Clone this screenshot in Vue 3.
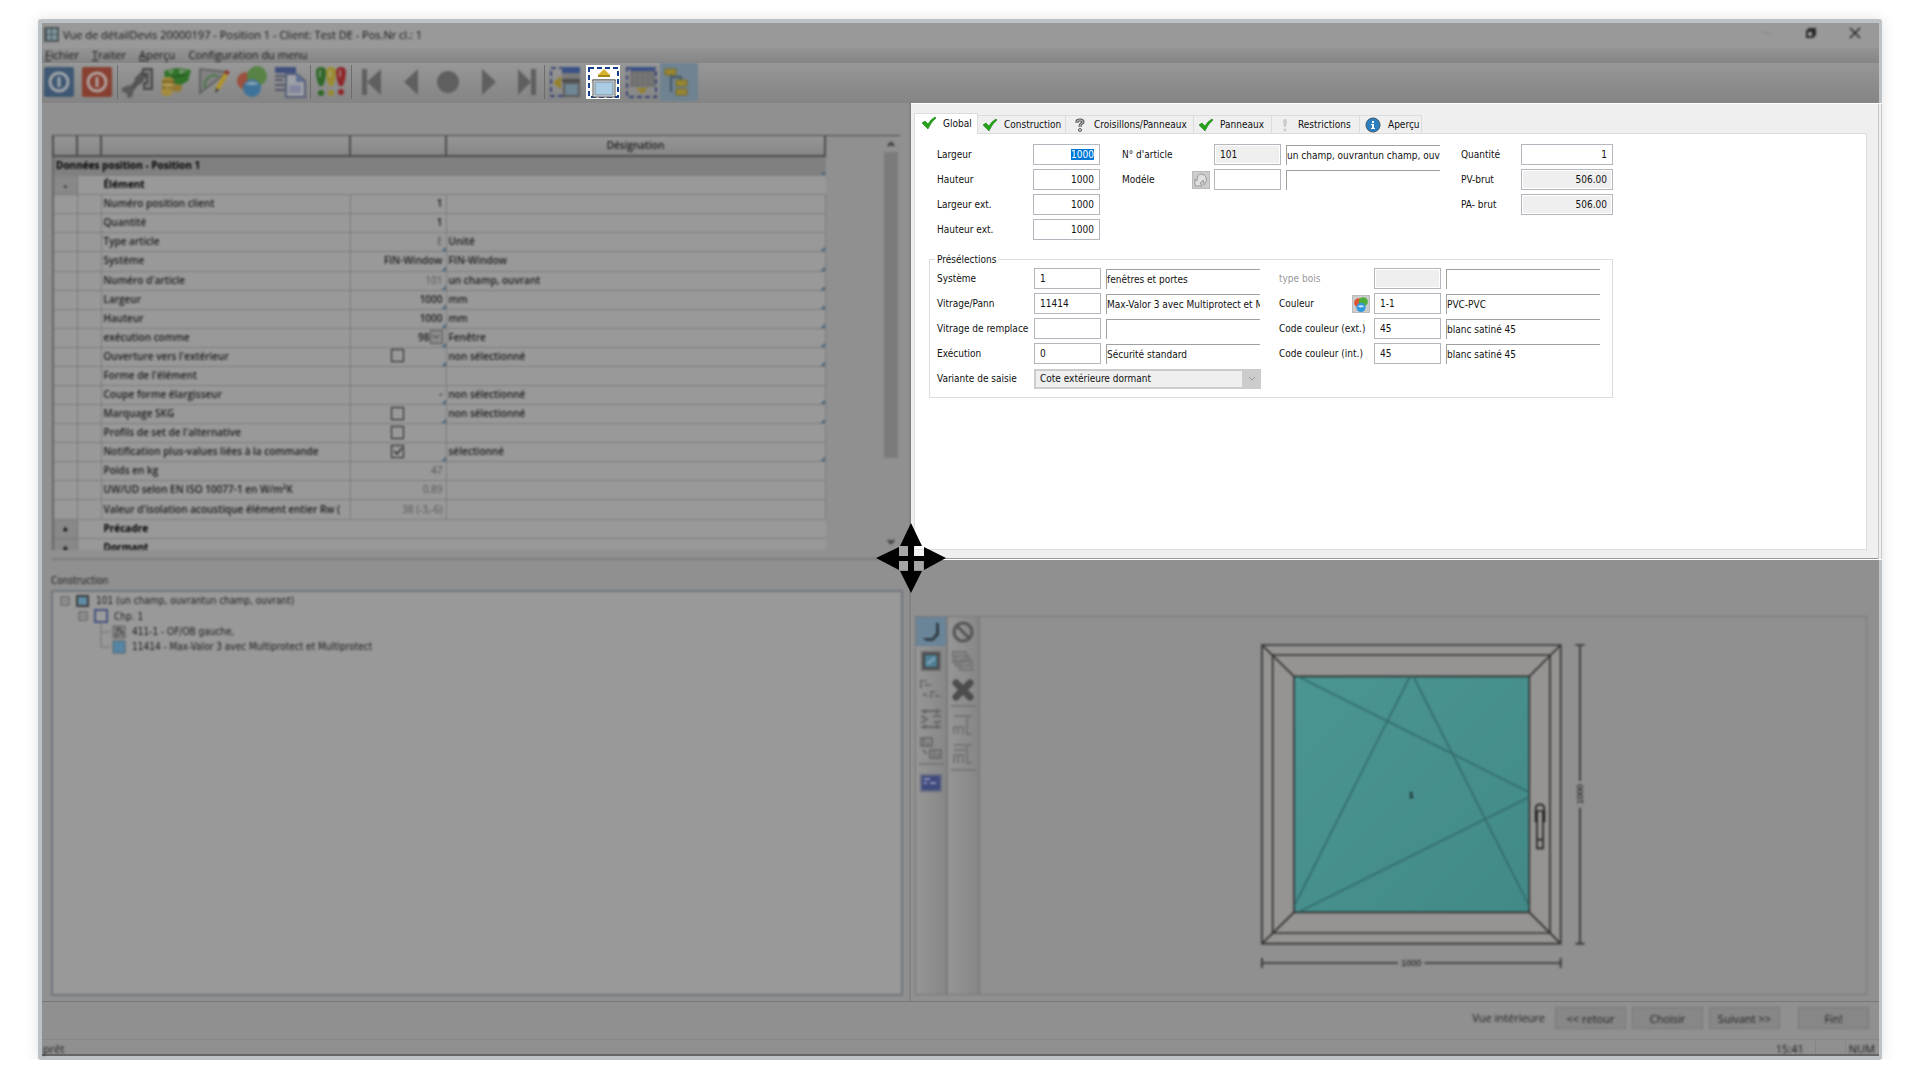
<script setup>
import { onMounted, ref } from 'vue'

const menus = ['Fichier', 'Traiter', 'Aperçu']

const rows = [
  { label: 'Numéro position client', value: '1' },
  { label: 'Quantité', value: '1' },
  { label: 'Type article', value: 'E', grey: true, name: 'Unité', mark: true },
  { label: 'Système', value: 'FIN-Window', name: 'FIN-Window', mark: true },
  { label: "Numéro d'article", value: '101', grey: true, name: 'un champ, ouvrant', mark: true },
  { label: 'Largeur', value: '1000', name: 'mm', mark: true },
  { label: 'Hauteur', value: '1000', name: 'mm', mark: true },
  { label: 'exécution comme', value: '98', drop: true, name: 'Fenêtre', mark: true },
  { label: "Ouverture vers l'extérieur", check: true, name: 'non sélectionné', mark: true },
  { label: "Forme de l'élément" },
  { label: 'Coupe forme élargisseur', value: '-', name: 'non sélectionné', mark: true },
  { label: 'Marquage SKG', check: true, name: 'non sélectionné', mark: true },
  { label: "Profils de set de l'alternative", check: true },
  { label: 'Notification plus-values liées à la commande', check: true, on: true, name: 'sélectionné', mark: true },
  { label: 'Poids en kg', value: '47', grey: true },
  { label: 'UW/UD selon EN ISO 10077-1 en W/m²K', value: '0.89', grey: true },
  { label: "Valeur d'isolation acoustique élément entier Rw (", value: '38 (-3,-6)', grey: true },
]

const tabs = [
  { name: 'Global', icon: 'check', width: 'w64' },
  { name: 'Construction', icon: 'check', width: 'w88' },
  { name: 'Croisillons/Panneaux', icon: 'question', width: 'w128' },
  { name: 'Panneaux', icon: 'check', width: 'w78' },
  { name: 'Restrictions', icon: 'exclaim', width: 'w88' },
  { name: 'Aperçu', icon: 'info', width: 'w62' },
]
const active = ref('Global')

const sizes = [
  { id: 'hauteur', label: 'Hauteur' },
  { id: 'largeur-ext', label: 'Largeur ext.' },
  { id: 'hauteur-ext', label: 'Hauteur ext.' },
]

const presetsLeft = [
  { id: 'systeme', label: 'Système', code: '1', text: 'fenêtres et portes' },
  { id: 'vitrage', label: 'Vitrage/Pann', code: '11414', text: 'Max-Valor 3 avec Multiprotect et M' },
  { id: 'remplace', label: 'Vitrage de remplace', code: '', text: '' },
  { id: 'execution', label: 'Exécution', code: '0', text: 'Sécurité standard' },
]
const presetsRight = [
  { id: 'bois', label: 'type bois', code: '', text: '', off: true },
  { id: 'couleur', label: 'Couleur', code: '1-1', text: 'PVC-PVC', picker: true },
  { id: 'code-ext', label: 'Code couleur (ext.)', code: '45', text: 'blanc satiné 45' },
  { id: 'code-int', label: 'Code couleur (int.)', code: '45', text: 'blanc satiné 45' },
]

const widthField = ref(null)
onMounted(() => {
  widthField.value.focus()
  widthField.value.select()
})
</script>

<template>
  <main class="window">
    <header class="titlebar">
      <svg class="soft" width="15" height="15" viewBox="0 0 15 15">
        <rect width="15" height="15" fill="#4d5558" />
        <path d="M3 2h4v5H3zM8 2h5v5H8zM3 8h4v5H3zM8 8h5v5H8z" fill="#7d949c" />
      </svg>
      <h1 class="soft">Vue de détailDevis 20000197 - Position 1 - Client: Test DE - Pos.Nr cl.: 1</h1>
      <div class="caption soft">
        <button type="button" aria-label="Réduire"><svg width="12" height="12" viewBox="0 0 12 12"><path d="M2 6h8" stroke="#808080" /></svg></button>
        <button type="button" aria-label="Restaurer"><svg width="12" height="12" viewBox="0 0 12 12" fill="none" stroke="#2a2a2a" stroke-width="2"><path d="M2 4h6v6H2zM4 3V2h6v6H9" /></svg></button>
        <button type="button" aria-label="Fermer"><svg width="12" height="12" viewBox="0 0 12 12" stroke="#2a2a2a" stroke-width="1.6"><path d="M1 1l10 10M11 1L1 11" /></svg></button>
      </div>
    </header>

    <nav class="menubar">
      <button v-for="m in menus" :key="m" type="button" class="soft"><u>{{ m[0] }}</u>{{ m.slice(1) }}</button>
      <button type="button" class="soft">Configuration du menu</button>
    </nav>

    <div class="toolbar">
      <div class="group">
        <button type="button" class="soft" aria-label="Enregistrer">
          <svg viewBox="0 0 32 32"><rect x="1" y="1" width="30" height="30" rx="2" fill="#365270" /><circle cx="16" cy="16" r="9" fill="none" stroke="#a3a8ac" stroke-width="3" /><path d="M16 11v10" stroke="#a3a8ac" stroke-width="3" /></svg>
        </button>
        <button type="button" class="soft" aria-label="Quitter">
          <svg viewBox="0 0 32 32"><rect x="1" y="1" width="30" height="30" rx="2" fill="#873726" /><circle cx="16" cy="16" r="9" fill="none" stroke="#b3a39f" stroke-width="3" /><path d="M16 11v10" stroke="#b3a39f" stroke-width="3" /></svg>
        </button>
      </div>
      <div class="group">
        <button type="button" class="soft" aria-label="Outils">
          <svg viewBox="0 0 32 32"><path d="M5 28L18 13" stroke="#4c4c4c" stroke-width="5" /><path d="M0 22l7-3 5 5-2 7-5 1 1-5-6-1z" fill="#555" /><path d="M12 13l8-8 5 5-7 9z" fill="#4f4f4f" /><path d="M21 3h9v20h-8v-6h3V8h-4z" fill="#777" stroke="#3f3f3f" stroke-width="2" /></svg>
        </button>
        <button type="button" class="soft" aria-label="Prix">
          <svg viewBox="0 0 32 32"><path d="M4 5l12-3 15 2-3 11-9 5L5 12z" fill="#27701f" /><path d="M8 5l6-1-3 4zM19 4l8 1-7 3z" fill="#7ba072" /><path d="M12 11l14-2" stroke="#1b5415" stroke-width="2" /><ellipse cx="8" cy="14" rx="6" ry="3" fill="#a68b36" /><path d="M2 14h12v9H2z" fill="#84691f" /><ellipse cx="7" cy="26" rx="6" ry="4" fill="#a68b36" /><ellipse cx="17" cy="22" rx="5" ry="4" fill="#947726" /><ellipse cx="8" cy="19" rx="6" ry="2" fill="#b19a4d" /></svg>
        </button>
        <button type="button" class="soft" aria-label="Dessin">
          <svg viewBox="0 0 32 32"><path d="M2 27V3l27 3z" fill="#808080" stroke="#5a5f5a" stroke-width="2" /><path d="M7 22a10 10 0 0 1 13-12" stroke="#42743d" stroke-width="2" fill="none" /><path d="M17 26l1-5 8-14 4 2-8 14z" fill="#b69422" /><path d="M26 7l2-3 4 2-2 3z" fill="#8c2d22" /><path d="M17 27l1-5 3 2z" fill="#333" /></svg>
        </button>
        <button type="button" class="soft" aria-label="Couleurs">
          <svg viewBox="0 0 32 32"><circle cx="10" cy="15" r="9" fill="#9c4a35" /><circle cx="21" cy="10" r="10" fill="#50823d" /><circle cx="16" cy="22" r="9" fill="#36709b" /><path d="M9 18q7-5 14 0-7 2-14 0z" fill="#88a5b8" /></svg>
        </button>
        <button type="button" class="soft" aria-label="Listes">
          <svg viewBox="0 0 32 32"><path d="M1 1h21v6H1z" fill="#37497b" /><path d="M1 10h10M1 14h8M1 19h10M1 24h10" stroke="#4a4f66" stroke-width="2" /><path d="M12 8h11l8 7v16H12z" fill="#a0a3a8" stroke="#4e5a75" stroke-width="2" /><path d="M22 7v9h9z" fill="#5b6c92" /><path d="M15 19h12v8H15z" fill="#8287a0" /></svg>
        </button>
      </div>
      <div class="group">
        <button type="button" class="soft" aria-label="Messages">
          <svg viewBox="0 0 32 32"><path d="M1 6q0-5 5-5t5 5q0 7-3 14H4Q1 13 1 6z" fill="#25621d" /><circle cx="6" cy="27" r="3" fill="#25621d" /><path d="M11 6q0-5 5-5t5 5q0 7-3 14h-4q-3-7-3-14z" fill="#9b8b25" /><circle cx="16" cy="27" r="3" fill="#9b8b25" /><path d="M21 6q0-5 5-5t5 5q0 7-3 14h-4q-3-7-3-14z" fill="#8e1c20" /><circle cx="26" cy="26" r="3" fill="#8e1c20" /><path d="M5 4v7M15 4v7M25 4v7" stroke="#bbb" stroke-width="2" opacity=".5" /></svg>
        </button>
      </div>
      <div class="group">
        <button type="button" class="soft" aria-label="Premier"><svg viewBox="0 0 32 32" fill="#5a5a5a"><path d="M6 3h5v26H6zM25 3v26L11 16z" /></svg></button>
        <button type="button" class="soft" aria-label="Précédent"><svg viewBox="0 0 32 32" fill="#5a5a5a"><path d="M24 3v26L10 16z" /></svg></button>
        <button type="button" class="soft" aria-label="Arrêt"><svg viewBox="0 0 32 32" fill="#5a5a5a"><circle cx="16" cy="16" r="11" /></svg></button>
        <button type="button" class="soft" aria-label="Suivant"><svg viewBox="0 0 32 32" fill="#5a5a5a"><path d="M12 3v26l14-13z" /></svg></button>
        <button type="button" class="soft" aria-label="Dernier"><svg viewBox="0 0 32 32" fill="#5a5a5a"><path d="M10 3v26l13-13zM23 3h5v26h-5z" /></svg></button>
      </div>
      <div class="group">
        <button type="button" class="soft" aria-label="Volet gauche">
          <svg viewBox="0 0 32 32"><rect x="2" y="2" width="28" height="28" fill="none" stroke="#2b3c72" stroke-width="2" stroke-dasharray="5 3" /><path d="M13 1h18v6H13z" fill="#2f4a84" /><path d="M13 7h18v6H13z" fill="#777" /><path d="M13 13h18v3H13z" fill="#444" /><path d="M15 17h15v13H15z" fill="#6c8596" stroke="#555" stroke-width="2" /><path d="M12 10v13l-8-6z" fill="#96801f" /></svg>
        </button>
        <button type="button" class="lit" aria-label="Volet haut">
          <svg viewBox="0 0 32 32"><rect x="1" y="1" width="30" height="30" fill="#fdfdfd" /><rect x="2" y="2" width="29" height="29" fill="none" stroke="#163a8c" stroke-width="2" stroke-dasharray="5 3" /><path d="M17 3l6 6v2H11V9z" fill="#d6b32a" /><path d="M11 9h12v2H11z" fill="#a8871a" /><path d="M5 13h24v3H5z" fill="#b9b9b9" /><path d="M6 14h22v17H6z" fill="#e8e8e8" stroke="#555" /><path d="M8 16h18v13H8z" fill="#a9cbe4" stroke="#7d8f9b" /></svg>
        </button>
        <button type="button" class="soft" aria-label="Volet bas">
          <svg viewBox="0 0 32 32"><rect x="2" y="2" width="29" height="29" fill="none" stroke="#2b3c72" stroke-width="2" stroke-dasharray="5 3" /><path d="M5 1h25v4H5z" fill="#2f4a84" /><path d="M5 5h25v16H5z" fill="#6b6b6b" /><path d="M5 9h25M5 13h25M5 17h25M10 5v16M15 5v16M20 5v16M25 5v16" stroke="#777" /><path d="M11 22h12l-6 6z" fill="#96801f" /></svg>
        </button>
        <button type="button" class="soft on" aria-label="Arborescence">
          <svg viewBox="0 0 32 32"><path d="M8 7v19M8 11h10v4" stroke="#3c5061" stroke-width="2" fill="none" /><path d="M2 3h11v6H2zM13 14h11v6H13zM13 23h11v6H13z" fill="#998628" stroke="#75651c" /></svg>
        </button>
      </div>
    </div>

    <div class="workspace">
      <section class="left">
        <div class="sheet soft">
          <div class="sheet-body">
            <table>
              <colgroup><col class="c1" /><col class="c2" /><col class="c3" /><col class="c4" /><col class="c5" /></colgroup>
              <thead><tr><th></th><th></th><th></th><th></th><th>Désignation</th></tr></thead>
              <tbody>
                <tr class="band"><td colspan="5" class="mark">Données position - Position 1</td></tr>
                <tr class="head"><td class="toggle"><button type="button">-</button></td><td></td><td colspan="3">Élément</td></tr>
                <tr v-for="r in rows" :key="r.label">
                  <td></td><td></td>
                  <td>{{ r.label }}</td>
                  <td class="value" :class="{ mark: r.mark, grey: r.grey, center: r.check }">
                    <input v-if="r.check" type="checkbox" :checked="r.on" :aria-label="r.label" />
                    <span v-else-if="r.drop" class="drop">{{ r.value }}<button type="button" aria-label="Ouvrir la liste"><svg width="8" height="6" viewBox="0 0 8 6"><path d="M1 1l3 3 3-3" fill="none" stroke="#333" /></svg></button></span>
                    <template v-else>{{ r.value }}</template>
                  </td>
                  <td :class="{ mark: r.mark }">{{ r.name }}</td>
                </tr>
                <tr class="head"><td class="toggle"><button type="button">+</button></td><td></td><td colspan="3">Précadre</td></tr>
                <tr class="head"><td class="toggle"><button type="button">+</button></td><td></td><td colspan="3">Dormant</td></tr>
              </tbody>
            </table>
          </div>
          <div class="scroll">
            <svg width="14" height="16" viewBox="0 0 14 16"><path d="M4 10l3-3 3 3" fill="none" stroke="#333" stroke-width="2" /></svg>
            <div class="thumb"></div>
            <svg width="14" height="16" viewBox="0 0 14 16"><path d="M4 6l3 3 3-3" fill="none" stroke="#333" stroke-width="2" /></svg>
          </div>
        </div>
        <div class="structure soft">
          <h2>Construction</h2>
          <div class="tree">
            <ul>
              <li class="l0">
                <svg width="10" height="10" viewBox="0 0 10 10"><path d="M1 1h8v8H1zM3 5h4" fill="none" stroke="#555" /></svg>
                <svg width="14" height="12" viewBox="0 0 14 12"><path d="M1 1h11v10H1z" fill="#5f8ba3" stroke="#3d3d3d" stroke-width="2" /></svg>
                <span>101 (un champ, ouvrantun champ, ouvrant)</span>
              </li>
              <li class="l1">
                <svg width="10" height="10" viewBox="0 0 10 10"><path d="M1 1h8v8H1zM3 5h4" fill="none" stroke="#555" /></svg>
                <svg width="14" height="14" viewBox="0 0 14 14"><path d="M1 1h12v12H1z" fill="#9c9c9c" stroke="#45527f" stroke-width="2" /></svg>
                <span>Chp. 1</span>
              </li>
              <li class="l2">
                <svg width="10" height="16" viewBox="0 0 10 16"><path d="M1 0v16M1 8h9" fill="none" stroke="#707070" /></svg>
                <svg width="14" height="14" viewBox="0 0 14 14"><path d="M1 1h12v12H1z" fill="#858585" stroke="#606060" /><path d="M3 11l4-9 5 9M3 3l8 4-8 5" fill="none" stroke="#444" /></svg>
                <span>411-1 - OF/OB gauche,</span>
              </li>
              <li class="l2">
                <svg width="10" height="16" viewBox="0 0 10 16"><path d="M1 0v8h9" fill="none" stroke="#707070" /></svg>
                <svg width="14" height="14" viewBox="0 0 14 14"><path d="M1 1h12v12H1z" fill="#5586a4" stroke="#52656f" /></svg>
                <span>11414 - Max-Valor 3 avec Multiprotect et Multiprotect</span>
              </li>
            </ul>
          </div>
        </div>
      </section>

      <section class="right">
        <form class="detail" @submit.prevent>
          <div class="tabs" role="tablist">
            <button v-for="t in tabs" :key="t.name" type="button" role="tab" :class="[t.width, { active: t.name === active }]" :aria-selected="t.name === active" @click="active = t.name">
              <svg v-if="t.icon === 'check'" width="14" height="14" viewBox="0 0 14 14"><path d="M0 7l3-2 3 3q3-5 7-7l1 1q-5 4-8 11z" fill="#23a315" stroke="#157c0d" stroke-width=".6" /></svg>
              <svg v-else-if="t.icon === 'question'" width="14" height="14" viewBox="0 0 14 14"><path d="M4 5V3q0-1 3-1t3 2q0 1-2 2-1 1-1 3" fill="none" stroke="#555" stroke-width="3" /><path d="M4 5V3q0-1 3-1t3 2q0 1-2 2-1 1-1 3" fill="none" stroke="#ccc" /><circle cx="7" cy="12" r="1.6" fill="#bbb" stroke="#555" stroke-width=".8" /></svg>
              <svg v-else-if="t.icon === 'exclaim'" width="14" height="14" viewBox="0 0 14 14"><path d="M6 3q0-2 2-2t2 2q0 3-1 6H7Q6 6 6 3z" fill="#ccc" /><circle cx="8" cy="12" r="1.4" fill="#ccc" /></svg>
              <svg v-else width="16" height="16" viewBox="0 0 16 16"><circle cx="8" cy="8" r="7" fill="#2d7fc0" stroke="#3a5468" /><path d="M6 7h3v4h1v1H6v-1h1V8H6zM7 4h2v2H7z" fill="#fff" /></svg>
              {{ t.name }}
            </button>
          </div>
          <div class="page">
            <div class="basics">
              <div class="grid sizes">
                <label for="largeur">Largeur</label>
                <input id="largeur" ref="widthField" class="num" type="text" value="1000" />
                <template v-for="s in sizes" :key="s.id">
                  <label :for="s.id">{{ s.label }}</label>
                  <input :id="s.id" class="num" type="text" value="1000" />
                </template>
              </div>
              <div class="grid article">
                <label for="article">N° d'article</label>
                <input id="article" class="ro" type="text" value="101" readonly />
                <output>un champ, ouvrantun champ, ouv</output>
                <div class="pair">
                  <label for="modele">Modéle</label>
                  <button type="button" class="mini" aria-label="Annuler le modèle"><svg width="16" height="16" viewBox="0 0 16 16"><path d="M2 7v7h7l-2-3q3-1 3-3 1 2 1 5 4-4 2-8-2-3-5-3-4 0-4 7z" fill="#e0e0e0" stroke="#999" /></svg></button>
                </div>
                <input id="modele" type="text" value="" />
                <output></output>
              </div>
              <div class="grid totals">
                <label for="quantite">Quantité</label>
                <input id="quantite" class="num" type="text" value="1" />
                <label for="pv">PV-brut</label>
                <input id="pv" class="num ro" type="text" value="506.00" readonly />
                <label for="pa">PA- brut</label>
                <input id="pa" class="num ro" type="text" value="506.00" readonly />
              </div>
            </div>
            <fieldset>
              <legend>Présélections</legend>
              <div class="presets">
                <div class="grid preset">
                  <template v-for="p in presetsLeft" :key="p.id">
                    <label :for="p.id">{{ p.label }}</label>
                    <input :id="p.id" type="text" :value="p.code" />
                    <output>{{ p.text }}</output>
                  </template>
                  <label for="variante">Variante de saisie</label>
                  <div class="select">
                    <select id="variante" disabled><option>Cote extérieure dormant</option></select>
                    <svg width="8" height="6" viewBox="0 0 8 6"><path d="M1 1l3 3 3-3" fill="none" stroke="#999" /></svg>
                  </div>
                </div>
                <div class="grid preset second">
                  <template v-for="p in presetsRight" :key="p.id">
                    <div class="pair">
                      <label :for="p.id" :class="{ off: p.off }">{{ p.label }}</label>
                      <button v-if="p.picker" type="button" class="mini" aria-label="Choisir la couleur"><svg width="16" height="16" viewBox="0 0 14 14"><circle cx="5" cy="6" r="4" fill="#dd5533" /><circle cx="9" cy="5" r="4" fill="#4fae3a" /><circle cx="7" cy="10" r="4" fill="#3398dd" /><path d="M4 9q3-2 6 0-3 2-6 0z" fill="#cfe6f7" /></svg></button>
                    </div>
                    <input :id="p.id" type="text" :value="p.code" :class="{ ro: p.off }" :disabled="p.off" />
                    <output>{{ p.text }}</output>
                  </template>
                </div>
              </div>
            </fieldset>
          </div>
          <svg class="move" width="70" height="70" viewBox="0 0 70 70">
            <path d="M23 23h24v24H23z" fill="#fff" opacity=".2" />
            <path d="M35 0l11 23H38v10h10V24l22 11-22 12V38H38v10h8L35 70 24 48h8V38H23v9L0 35l23-11v9h9V23h-8z" fill="#000" />
          </svg>
        </form>

        <div class="viewer soft">
          <div class="strip">
            <button type="button" class="on" aria-label="Vue"><svg viewBox="0 0 24 24"><path d="M17 2l3 2v11l-6 6H7l-3-3h9l4-5z" fill="#333f48" /><path d="M2 2h13v10l-5 5H2z" fill="#6a8498" /></svg></button>
            <button type="button" aria-label="Vitrage"><svg viewBox="0 0 24 24"><path d="M2 2h20v20H2z" fill="#6b6b6b" /><path d="M5 5h14v14H5z" fill="#4f7f95" stroke="#444" stroke-width="2" /><path d="M8 15l8-6" stroke="#7aa0b3" stroke-width="3" /></svg></button>
            <button type="button" aria-label="Déplacer"><svg viewBox="0 0 24 24" fill="none" stroke="#666" stroke-width="2"><path d="M2 10V3h5M6 7h6M4 16l5 2M12 20v-6h5M16 18h6" stroke-dasharray="4 1" /></svg></button>
            <button type="button" aria-label="Croisillons"><svg viewBox="0 0 24 24" fill="none" stroke="#666" stroke-width="2"><path d="M2 4h20M2 9l6 3-6 4M2 20h20M14 9h8M15 15h7M6 2v5M18 2v5M6 17v5M18 17v5" /></svg></button>
            <button type="button" aria-label="Copier la partie"><svg viewBox="0 0 24 24" fill="none" stroke="#6c6c6c" stroke-width="2"><path d="M2 2h11v8H2zM5 2v8M9 5v4M4 14l4 4M11 14h11v8H11zM15 14v8M19 17v4" /></svg></button>
            <hr />
            <button type="button" aria-label="Écran"><svg viewBox="0 0 24 24"><path d="M2 4h20v16H2z" fill="#3f4a7e" stroke="#686d80" stroke-width="2" /><path d="M5 8h6M5 12h3M11 12h6" stroke="#8f95b8" stroke-width="2" /></svg></button>
          </div>
          <div class="strip">
            <button type="button" aria-label="Interdire"><svg viewBox="0 0 24 24" fill="none" stroke="#555" stroke-width="3"><circle cx="12" cy="12" r="9" /><path d="M6 6l12 12" /></svg></button>
            <button type="button" aria-label="Dupliquer"><svg viewBox="0 0 24 24" fill="#8c8c8c" stroke="#757575" stroke-width="2"><path d="M2 3h13v10H2zM5 7h13v10H5zM9 11h12v10H9z" /></svg></button>
            <button type="button" aria-label="Supprimer"><svg viewBox="0 0 24 24" stroke="#4c4c4c" stroke-width="7" stroke-linecap="round"><path d="M5 5l14 14M19 5L5 19" /></svg></button>
            <hr />
            <button type="button" aria-label="Profil"><svg viewBox="0 0 24 24" fill="none" stroke="#757575" stroke-width="2"><path d="M3 3h18M16 3v18h5M3 21v-7h9v7M7 14v7" /></svg></button>
            <button type="button" aria-label="Profil double"><svg viewBox="0 0 24 24" fill="none" stroke="#757575" stroke-width="2"><path d="M3 3h18M3 8h12M16 3v18h5M3 21v-8h9v8M7 13v8" /></svg></button>
            <hr />
          </div>
          <div class="canvas">
            <svg width="326" height="326" viewBox="90 100 978 978">
              <defs><linearGradient id="glass" x1="0" y1="0" x2="1" y2="1"><stop offset="0" stop-color="#4b9592" /><stop offset="1" stop-color="#418a88" /></linearGradient></defs>
              <g stroke="#333" stroke-width="5" fill="none">
                <path d="M96 106h896v896H96z" fill="#969492" />
                <path d="M128 136h832v834H128z" />
                <path d="M96 106l96 94M992 106l-94 94M96 1002l96-94M992 1002l-94-94" />
                <path d="M192 200h706v708H192z" fill="url(#glass)" />
                <path d="M96 1060h408M584 1060h408M96 1045v30M992 1045v30M1050 106v408M1050 594v408M1036 106h28M1036 1002h28" />
              </g>
              <path d="M204 200L898 548M898 562L204 908M192 890L540 200M550 200L898 890" stroke="#2f6563" stroke-width="4" fill="none" />
              <path d="M917 638V598q0-14 13-14t13 14v40M921 604h18v112h-18zM921 690h18" stroke="#222" stroke-width="5" fill="none" />
              <g font-family="Liberation Sans, sans-serif" font-size="27" text-anchor="middle" fill="#111">
                <text x="544" y="564" font-weight="bold">1</text>
                <text x="544" y="1070">1000</text>
                <text x="1060" y="554" transform="rotate(-90 1060 554)">1000</text>
              </g>
            </svg>
          </div>
        </div>
      </section>
    </div>

    <footer class="actions">
      <span class="soft">Vue intérieure</span>
      <button type="button" class="soft">&lt;&lt; retour</button>
      <button type="button" class="soft">Choisir</button>
      <button type="button" class="soft">Suivant &gt;&gt;</button>
      <button type="button" class="soft last">Fin!</button>
    </footer>
    <div class="status">
      <span class="soft">prêt</span>
      <span class="soft clock">15:41</span>
      <span class="cell"></span>
      <span class="soft num-lock">NUM</span>
    </div>
  </main>
</template>

<style>
body {
  margin: 0;
  background: #fff;
}
</style>

<style scoped>
* {
  box-sizing: border-box;
}
.window {
  display: flex;
  flex-direction: column;
  height: calc(100vh - 39px);
  min-height: 900px;
  margin: 19px 38px 0;
  border: 4px solid #bcc2c6;
  border-right-width: 3px;
  border-radius: 3px;
  box-shadow: 0 0 14px #0000001f;
  background: #909090;
  color: #1c1c1c;
  font: 10px/15px 'DejaVu Sans Condensed', 'DejaVu Sans', sans-serif;
}
.soft {
  filter: blur(1px);
}
button {
  display: flex;
  align-items: center;
  justify-content: center;
  padding: 0;
  border: 0;
  background: none;
  color: inherit;
  font: inherit;
}
svg {
  flex: none;
  display: block;
}
h1,
h2 {
  margin: 0;
  font: inherit;
}

.titlebar {
  display: flex;
  flex: none;
  align-items: center;
  gap: 4px;
  height: 25px;
  padding: 0 2px 3px;
  background: #999;
}
.titlebar h1,
.menubar,
.sheet,
.actions,
.status {
  font-family: 'Open Sans', 'Noto Sans', sans-serif;
}
.titlebar h1 {
  color: #111;
  font-size: 11px;
}
.caption {
  display: flex;
  margin-left: auto;
  padding-bottom: 3px;
}
.caption button {
  width: 44px;
  height: 12px;
}
.menubar {
  display: flex;
  flex: none;
  align-items: flex-start;
  gap: 13px;
  height: 15px;
  padding-left: 3px;
  background: linear-gradient(#959595, #858585);
  color: #111;
  font-size: 11px;
  line-height: 13px;
}
.toolbar {
  display: flex;
  flex: none;
  height: 40px;
  padding-top: 2px;
  background: linear-gradient(#979797, #848484);
}
.group {
  display: flex;
  gap: 4px;
  height: 34px;
}
.group + .group {
  margin-left: 3px;
  padding-left: 3px;
  border-left: 1px solid #6d6d6d;
}
.group button {
  width: 34px;
  height: 34px;
}
.group .soft {
  filter: blur(1px) opacity(0.9);
}
.group svg {
  width: 32px;
  height: 32px;
}
.group .lit {
  background: #fff;
}
.group .on {
  background: #6b8192;
  box-shadow: 0 0 0 2px #6b8192;
}

.workspace {
  display: grid;
  flex: 1;
  grid-template-columns: minmax(0, 869fr) minmax(0, 968fr);
  grid-template-rows: minmax(0, 1fr);
  min-height: 0;
  border-bottom: 1px solid #777;
}
.left,
.right {
  display: grid;
  grid-template-rows: minmax(0, 458fr) minmax(0, 441fr);
  min-width: 0;
}
.left {
  border-right: 2px solid #838383;
}
.sheet {
  display: flex;
  justify-content: space-between;
  margin: 32px 9px 0 10px;
  padding-bottom: 8px;
  border-bottom: 2px solid #7b7b7b;
  font-size: 10px;
}
.sheet-body {
  flex: 1;
  overflow: hidden;
  border-top: 1px solid #4a4a4a;
}
table {
  width: 774px;
  height: 422px;
  border-collapse: collapse;
  table-layout: fixed;
  border-left: 2px solid #666;
}
.c1,
.c2 {
  width: 24px;
}
.c3 {
  width: 249px;
}
.c4 {
  width: 96px;
}
th {
  height: 20px;
  padding: 0;
  border: 2px solid #4d4d4d;
  border-top: 0;
  background: linear-gradient(#969696, #878787);
  font-weight: 600;
}
td {
  padding: 0 2px 2px;
  border: 1px solid #7c7c7c;
  background-color: #999;
  font-weight: 600;
  line-height: 14px;
  white-space: nowrap;
  overflow: hidden;
}
.band td {
  background-color: #808080;
  border-color: #808080;
  color: #000;
  font-weight: 700;
}
.head td {
  border-right-color: #999;
  color: #000;
  font-weight: 700;
}
.head .toggle {
  padding: 0;
  background: #888;
  border-color: #777;
}
.toggle button {
  width: 100%;
  height: 14px;
}
td.mark {
  background-image: linear-gradient(135deg, transparent 50%, #4d6a80 50%);
  background-position: right bottom;
  background-repeat: no-repeat;
  background-size: 4px 4px;
}
.value {
  padding-right: 3px;
  text-align: right;
}
.value.center {
  text-align: center;
}
.grey {
  color: #555;
  font-weight: 400;
}
.drop {
  display: flex;
  justify-content: flex-end;
}
.drop button {
  width: 13px;
  height: 14px;
  border: 1px solid #555;
  background: #8b8b8b;
}
input[type='checkbox'] {
  display: block;
  width: 13px;
  height: 13px;
  margin: 0 auto;
  padding: 0;
  appearance: none;
  border: 1px solid #222;
  background: none;
}
input[type='checkbox']:checked {
  background: url("data:image/svg+xml,%3Csvg xmlns='http://www.w3.org/2000/svg' viewBox='0 0 11 11'%3E%3Cpath d='M2 5l3 3 5-6' fill='none' stroke='%23222' stroke-width='1.4'/%3E%3C/svg%3E");
}
.scroll {
  display: flex;
  flex: none;
  flex-direction: column;
  width: 16px;
  padding-right: 2px;
  border-top: 1px solid #4a4a4a;
}
.thumb {
  flex: 0 1 306px;
  margin-bottom: auto;
  background: #7b7b7b;
}

.structure {
  display: flex;
  flex-direction: column;
  padding: 13px 6px 5px 9px;
}
.tree {
  flex: 1;
  margin-top: 2px;
  border: 2px solid #70757b;
  background: #999;
}
.tree ul {
  display: flex;
  flex-direction: column;
  justify-content: space-between;
  height: 62px;
  margin: 0;
  padding: 1px 0 0 7px;
  list-style: none;
}
.tree li {
  display: flex;
  align-items: center;
  gap: 6px;
  height: 15px;
}
.l1 {
  padding-left: 18px;
}
.l2 {
  padding-left: 40px;
}
.tree .l2 {
  gap: 2px;
}
.l2 span {
  padding-left: 4px;
}

.detail {
  position: relative;
  z-index: 1;
  display: flex;
  flex-direction: column;
  margin-right: -3px;
  padding: 9px 15px 9px 3px;
  border-top: 1px solid #fff;
  border-bottom: 1px solid #fff;
  background: #efefef;
  box-shadow: inset -1px 0 #c4c8cc, inset -3px 0 #efefef, inset -4px 0 #c4c8cc, inset 0 -1px #999;
  color: #111;
}
.tabs {
  display: flex;
  align-items: flex-end;
  height: 20px;
}
.tabs button {
  justify-content: flex-start;
  gap: 7px;
  height: 18px;
  padding-left: 5px;
  border: 1px solid #dcdcdc;
  border-left: 0;
  border-bottom: 0;
  white-space: nowrap;
}
.tabs .active {
  z-index: 1;
  height: 21px;
  margin-bottom: -1px;
  padding: 0 0 2px 7px;
  border-left: 1px solid #dcdcdc;
  background: #fff;
}
.w62 {
  width: 62px;
}
.w64 {
  width: 64px;
}
.w78 {
  width: 78px;
}
.w88 {
  width: 88px;
}
.tabs .w128 {
  width: 128px;
  padding-left: 7px;
}
.page {
  flex: 1;
  padding: 10px 14px;
  border: 1px solid #dcdcdc;
  background: #fff;
}
.basics {
  display: flex;
  align-items: flex-start;
  gap: 22px;
  padding-left: 8px;
}
.grid {
  display: grid;
  grid-auto-rows: 21px;
  row-gap: 4px;
  align-items: center;
}
.sizes {
  grid-template-columns: 96px 67px;
}
.article {
  grid-template-columns: 92px 67px 154px;
}
.totals {
  grid-template-columns: 60px 92px;
  margin-left: 4px;
}
.preset {
  grid-template-columns: 97px 67px 154px;
}
.second {
  grid-template-columns: 95px 67px 154px;
}
.article output,
.preset output {
  margin-left: 5px;
  margin-right: -5px;
}
.grid label {
  white-space: nowrap;
}
.off {
  color: #999;
}
.pair {
  display: flex;
  align-items: center;
  justify-content: space-between;
  padding-right: 4px;
}
.mini {
  width: 18px;
  height: 18px;
  background: #ccc;
  border: 1px solid #bbb;
}
input {
  width: 100%;
  height: 21px;
  padding: 0 5px;
  border: 1px solid #b4b6bd;
  border-radius: 0;
  background: #fff;
  color: #111;
  font: inherit;
  outline: 0;
}
input::selection {
  background: #0078d7;
  color: #fff;
}
.num {
  text-align: right;
}
.ro {
  background: #efefef;
  box-shadow: inset 0 0 0 1px #fff;
}
output {
  height: 20px;
  padding-top: 2px;
  border-top: 1px solid #a0a0a0;
  border-left: 1px solid #a0a0a0;
  white-space: nowrap;
  overflow: hidden;
}
fieldset {
  width: fit-content;
  margin: 12px 0 0;
  padding: 1px 17px 8px 7px;
  border: 1px solid #dcdcdc;
}
legend {
  margin-left: -2px;
  padding: 0 2px;
}
.presets {
  display: flex;
  gap: 24px;
}
.select {
  position: relative;
  grid-column: span 2;
  width: 227px;
}
.select select {
  width: 100%;
  height: 20px;
  padding: 0 4px;
  appearance: none;
  border: 2px solid #ccc;
  border-right-width: 19px;
  border-radius: 0;
  background: #efefef;
  color: #111;
  font: inherit;
  opacity: 1;
}
.select svg {
  position: absolute;
  top: 7px;
  right: 5px;
}
.move {
  position: absolute;
  left: -35px;
  bottom: -34px;
}

.viewer {
  display: flex;
  margin: 56px 12px 6px 4px;
  border: 1px solid #777;
}
.strip {
  display: flex;
  flex: none;
  flex-direction: column;
  align-items: center;
  width: 32px;
  border-right: 2px solid #7c7c7c;
  background: linear-gradient(90deg, #969696, #878787);
}
.strip button {
  width: 30px;
  height: 29px;
}
.strip svg {
  width: 24px;
  height: 24px;
}
.strip .on {
  background: #6a8498;
}
.strip hr {
  width: 25px;
  margin: 1px 0 3px;
  border: 0;
  border-top: 2px solid #777;
}
.canvas {
  display: flex;
  flex: 1;
  align-items: center;
  justify-content: center;
}

.actions {
  display: flex;
  flex: none;
  align-items: flex-start;
  justify-content: flex-end;
  gap: 6px;
  height: 37px;
  padding: 5px 10px 0;
  font-size: 11px;
}
.actions span {
  padding: 3px 4px 0 0;
}
.actions button {
  width: 71px;
  height: 22px;
  border: 1px solid #787878;
  background: #878787;
}
.actions .last {
  margin-left: 12px;
}
.status {
  display: flex;
  flex: none;
  height: 17px;
  padding: 1px 4px 0 1px;
  border-top: 1px solid #878787;
  border-bottom: 2px solid #666;
  font-size: 11px;
}
.clock {
  margin-left: auto;
}
.cell {
  width: 31px;
  margin: 0 3px 0 11px;
  border-left: 1px solid #858585;
  border-right: 1px solid #858585;
}
</style>
